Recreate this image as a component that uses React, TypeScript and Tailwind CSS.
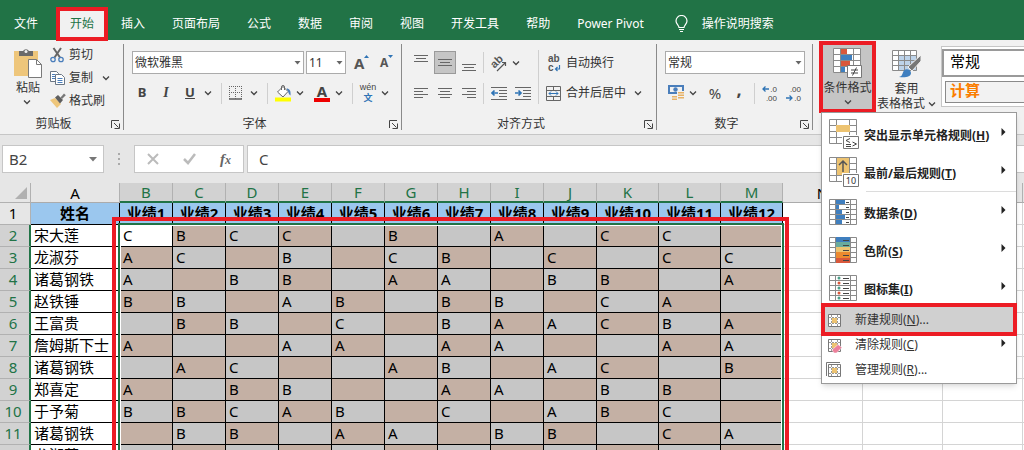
import React from 'react';

const TABS = ['插入', '页面布局', '公式', '数据', '审阅', '视图', '开发工具', '帮助', 'Power Pivot'];

const COLUMNS = 'ABCDEFGHIJKLMNOPQ'.split('');

// one character per column B..M, "-" is an empty cell
const ROWS = [
  { name: '宋大莲', grades: 'CBCC-B-A-CC-' },
  { name: '龙淑芬', grades: 'AC-B-CB-C-CC' },
  { name: '诸葛钢铁', grades: 'A-BB-AA-BB-A' },
  { name: '赵铁锤', grades: 'BB-AB-BB-CA-' },
  { name: '王富贵', grades: '-BB-C-BAACBA' },
  { name: '詹姆斯下士', grades: 'A--AA-AA--AA' },
  { name: '诸葛钢铁', grades: '-AC--AB-AC-B' },
  { name: '郑喜定', grades: 'A-BB--AA-BB-' },
  { name: '于予菊', grades: 'BBCAB-C-ABC-' },
  { name: '诸葛钢铁', grades: '-BB-AA-BB-CA' },
  { name: '龙淑芬', grades: 'B-CA-BB-AC-B' },
];

const Chevron = () => (
  <svg width="8" height="6" viewBox="0 0 8 6" fill="none" stroke="#444" strokeWidth="1.3" className="shrink-0">
    <path d="M1 1.5l3 3 3-3" />
  </svg>
);

const ChevronButton = ({ label }: { label: string }) => (
  <button aria-label={label} className="flex h-full w-3 items-center justify-center">
    <Chevron />
  </button>
);

const Sep = () => <div className="mx-[7px] h-[21px] w-px bg-[#cfcfcf]" />;

const Divider = () => <div className="my-1 w-px shrink-0 bg-[#8a8a8a]" />;

const Dropdown = ({ label, value, width }: { label: string; value: string; width: string }) => (
  <div className={`relative h-[23px] ${width}`}>
    <select
      aria-label={label}
      className="h-full w-full appearance-none border border-[#ababab] bg-white pl-0.5 text-xs text-[#333]"
    >
      <option>{value}</option>
    </select>
    <svg className="pointer-events-none absolute right-[3px] top-[10px]" width="7" height="4" fill="#666">
      <path d="M0.5 0h6L3.5 3.5z" />
    </svg>
  </div>
);

const Group = ({ label, width, children }: { label: string; width: string; children: React.ReactNode }) => (
  <section aria-label={label} className={`flex shrink-0 flex-col ${width}`}>
    <div className="h-[75px]">{children}</div>
    <div className="flex h-[18px] items-center">
      <span className="flex-1 text-center leading-4">{label}</span>
      <button aria-label={`${label}设置`} className="flex w-4 justify-center">
        <svg width="9" height="9" fill="none" stroke="#444">
          <path d="M0.5 8V0.5H8M3 3l4.5 4.5M8.500 3.500V8.500H3.500" />
        </svg>
      </button>
    </div>
  </section>
);

/* ---------- ribbon icons ---------- */

const PasteIcon = () => (
  <svg width="28" height="30" viewBox="0 0 28 30" className="shrink-0">
    <path d="M0 3h24v25H0z" fill="#eec67b" />
    <path d="M5 3h4a3.500 3.500 0 0 1 6 0h4v5H5z" fill="#6a6a6a" />
    <circle cx="12" cy="3.500" r="1.500" fill="#f1f1f1" />
    <path d="M14.500 11.500h8l5 5v13h-13z" fill="#fff" stroke="#7a7a7a" />
    <path d="M22.500 11.500v5h5" fill="none" stroke="#7a7a7a" />
  </svg>
);

const CutIcon = () => (
  <svg width="16" height="16" viewBox="0 0 16 16" fill="none">
    <path d="M3.500 1l6.500 9.500M11 1L4.500 10.500" stroke="#666" strokeWidth="2" />
    <circle cx="3" cy="12.500" r="2.200" stroke="#4a7ebb" strokeWidth="1.300" />
    <circle cx="11" cy="12.500" r="2.200" stroke="#4a7ebb" strokeWidth="1.300" />
  </svg>
);

const CopyIcon = () => (
  <svg width="16" height="16" viewBox="0 0 16 16" fill="#fff" stroke="#6b7785">
    <path d="M0.500 1.500h6l2 2v8h-8z" />
    <path d="M5.500 4.500h6l3 3v7h-9z" />
    <path d="M2 4.500h3M2 6.500h3M2 8.500h3M7.500 8.500h5M7.500 10.500h5M7.500 12.500h5" stroke="#4a7ebb" />
  </svg>
);

const BrushIcon = () => (
  <svg width="16" height="16" viewBox="0 0 16 16">
    <path d="M0 7l5-2 6 6-4 4z" fill="#eec67b" />
    <path d="M5 4.500l3-2.500 5 5-3 3.500z" fill="#5f5f5f" />
    <path d="M10.500 4.500L14 0.500l1.800 1.800L12 6z" fill="#777" />
  </svg>
);

const BordersIcon = () => (
  <svg width="14" height="14" fill="none" stroke="#666">
    <path d="M0.500 0v13M6.500 0v13M12.500 0v13M0 0.500h13M0 6.500h13" strokeDasharray="1 1" />
    <path d="M0 13h13" strokeWidth="1.600" />
  </svg>
);

const BucketIcon = () => (
  <svg width="17" height="17" viewBox="0 0 17 17" fill="none">
    <path d="M2.500 7L8 1.500l5 5-5 5.500z" fill="#fff" stroke="#666" />
    <path d="M6.500 5V2a1.500 1.500 0 0 1 3 0v3" stroke="#666" />
    <path d="M11.500 3.500c3 0 4.500 2 4 7-1.500-1-2-2.500-2.500-4z" fill="#4a7ebb" />
    <path d="M0 12.500h16v4H0z" fill="#ff0" />
  </svg>
);

const Lines = ({ d }: { d: string }) => (
  <svg width="14" height="16" viewBox="0 0 14 16" fill="none" stroke="#666">
    <path d={d} />
  </svg>
);

const IndentIcon = ({ right = false }: { right?: boolean }) => (
  <svg width="16" height="14" fill="none" stroke="#666">
    <path d="M0 1.500h16M8 4.500h8M8 7.500h8M8 10.500h8M0 13.500h16" />
    {right ? (
      <path d="M0 7h6M3.500 4.500L6 7 3.500 9.500" stroke="#2f74b5" strokeWidth="1.700" />
    ) : (
      <path d="M1 7h6M3.500 4.500L1 7l2.500 2.500" stroke="#2f74b5" strokeWidth="1.700" />
    )}
  </svg>
);

const AngleIcon = () => (
  <svg width="16" height="18" viewBox="0 0 16 18" fill="none" className="overflow-visible font-['Liberation_Sans']">
    <text x="0" y="12" fontSize="11" fontWeight="600" fill="#555" transform="rotate(-45 5 9)">
      ab
    </text>
    <path d="M6 17l8.500-8.500M14.500 12V8.500H11" stroke="#555" strokeWidth="1.200" />
  </svg>
);

const WrapIcon = () => (
  <svg width="14" height="18" viewBox="0 0 14 18" className="overflow-visible font-['Liberation_Sans']">
    <text x="0" y="8" fontSize="10" fontWeight="600" fill="#555">
      ab
    </text>
    <text x="0" y="17" fontSize="10" fontWeight="600" fill="#555">
      c
    </text>
    <path d="M11.500 11v4H7.500M9.500 13l-2 2 2 2" fill="none" stroke="#2f74b5" strokeWidth="1.200" />
  </svg>
);

const MergeIcon = () => (
  <svg width="15" height="15" fill="none" stroke="#666">
    <path d="M0.500 0.500h14v14h-14zM0 4.500h15M0 10.500h15M7.500 0v4.500M7.500 10.500V15" />
    <path d="M3 7.500h9M5 5.500l-2 2 2 2M10 5.500l2 2-2 2" stroke="#2f74b5" />
  </svg>
);

const MoneyIcon = () => (
  <svg width="17" height="16" viewBox="0 0 17 16">
    <path d="M0 0h16v9H0z" fill="#4a7ebb" />
    <path d="M2 2h12v5H2z" fill="#f1f1f1" />
    <circle cx="7.500" cy="4.500" r="2.200" fill="#4a7ebb" />
    <path d="M9 6h7v9H9z" fill="#f1f1f1" />
    <path d="M10 7h6v1.500h-6zM10 9.500h6V11h-6zM10 12h6v1.500h-6zM4 11h5v1.500H4zM4 13.500h5V15H4z" fill="#e8b266" />
  </svg>
);

const DecimalIcon = ({ more = false }: { more?: boolean }) => (
  <svg width="16" height="18" viewBox="0 0 16 18" className="overflow-visible font-['Liberation_Sans']">
    <text x="15" y="8" textAnchor="end" fontSize="8" fill="#444">
      {more ? '.0' : '.00'}
    </text>
    <text x="15" y="17" textAnchor="end" fontSize="8" fill="#444">
      {more ? '.00' : '.0'}
    </text>
    {more ? (
      <path d="M1 5h6M3.500 2.500L1 5l2.500 2.500" fill="none" stroke="#2f74b5" strokeWidth="1.300" />
    ) : (
      <path d="M0 14h6M3.500 11.500L6 14l-2.500 2.500" fill="none" stroke="#2f74b5" strokeWidth="1.300" />
    )}
  </svg>
);

const CondFormatIcon = () => (
  <svg width="29" height="30" viewBox="0 0 29 30">
    <path d="M0.500 0.500h27v24h-27z" fill="#fff" />
    <path d="M8 1h6v5H8zM8 12h9v6H8z" fill="#d9583b" />
    <path d="M8 6h11v6H8zM8 18h4v6H8z" fill="#3f7fbf" />
    <path d="M0.500 0.500h27v24h-27zM0 6.500h28M0 12.500h28M0 18.500h28M7.500 0v24M20.500 0v24" fill="none" stroke="#8a8a8a" />
    <path d="M14.500 17.500h14v12h-14z" fill="#fff" stroke="#777" />
    <path d="M18 22h7M18 25h7M23.500 19.500l-4 8" fill="none" stroke="#444" />
  </svg>
);

const TableFormatIcon = () => (
  <svg width="30" height="28" viewBox="0 0 30 28">
    <path d="M0.500 0.500h24v20h-24z" fill="#fff" />
    <path d="M7 6h18v15H7z" fill="#bdd3ea" />
    <path d="M0.500 0.500h24v20h-24zM0 5.500h25M0 10.500h25M0 15.500h25M6.500 0v20M12.500 0v20M18.500 0v20" fill="none" stroke="#8a8a8a" />
    <path d="M29 5v6l-9 10-4-4z" fill="#777" stroke="#f1f1f1" />
    <path d="M7 27c4-1 3-4 5-6.500 2.500-2.500 7-.5 7 2.500 0 4-6 5-12 4z" fill="#3f7fbf" />
  </svg>
);

/* ---------- menu icons ---------- */

const GRID = 'M0.500 0.500h27v25h-27zM0 5.500h28M0 10.500h28M0 15.500h28M0 20.500h28M6.500 0v25M21.500 0v25';

const HighlightIcon = () => (
  <svg width="30" height="30" viewBox="0 0 30 30">
    <path d="M0.500 0.500h27v24h-27zM0 6.500h28M0 12.500h28M0 18.500h28M7.500 0v24M20.500 0v24" fill="#fff" stroke="#8a8a8a" />
    <path d="M7 6h14v7H7z" fill="#edc371" />
    <path d="M13 16h17v14H13z" fill="#fff" />
    <path d="M14.500 17.500h15v12h-15z" fill="#fff" stroke="#777" />
    <path d="M21 19.500l-4 2 4 2M17 25.500h5M17 27.500h5M23.500 23l4 2-4 2" fill="none" stroke="#444" />
  </svg>
);

const TopIcon = () => (
  <svg width="30" height="30" viewBox="0 0 30 30">
    <path d="M0.500 0.500h27v24h-27zM0 6.500h28M0 12.500h28M0 18.500h28M7.500 0v24M20.500 0v24" fill="#fff" stroke="#8a8a8a" />
    <path d="M8 1h12v17H8z" fill="#edc371" />
    <path d="M14 15V4M10 8l4-4 4 4" fill="none" stroke="#555" strokeWidth="1.500" />
    <path d="M13 16h17v14H13z" fill="#fff" />
    <path d="M14.500 17.500h15v12h-15z" fill="#fff" stroke="#777" />
    <text x="22" y="27" fontSize="9" fontWeight="400" textAnchor="middle" fill="#333">
      10
    </text>
  </svg>
);

const DataBarIcon = () => (
  <svg width="28" height="26">
    <path d={GRID} fill="#fff" stroke="#8a8a8a" />
    <path d="M7 1h9v4H7zM7 6h3v4H7zM7 11h6v4H7zM7 16h9v4H7zM7 21h6v4H7z" fill="#3f7fbf" />
    <path d="M17 3.500h3M17 8.500h3M17 13.500h3M17 18.500h3M17 23.500h3" stroke="#444" />
  </svg>
);

const ScaleIcon = () => (
  <svg width="28" height="26">
    <path d={GRID} fill="#fff" stroke="#8a8a8a" />
    <path d="M7 0h14v5H7z" fill="#3f7fbf" />
    <path d="M7 5h14v5H7z" fill="#6aab9c" />
    <path d="M7 10h14v5H7z" fill="#edc371" />
    <path d="M7 15h14v6H7z" fill="#ec8a2f" />
    <path d="M7 21h14v5H7z" fill="#d9583b" />
    <path d="M14 3.500h6M14 8.500h6M14 13.500h6M14 18.500h6M14 23.500h6" stroke="#444" />
  </svg>
);

const IconSetIcon = () => (
  <svg width="28" height="26">
    <path d={GRID} fill="#fff" stroke="#8a8a8a" />
    {['#4ca08a', '#d9583b', '#4ca08a', '#d9583b', '#4ca08a'].map((color, i) => (
      <circle key={i} cx="10" cy={3 + i * 5} r="1.500" fill={color} />
    ))}
    <path d="M14 3.500h6M14 8.500h6M14 13.500h6M14 18.500h6M14 23.500h6" stroke="#444" />
  </svg>
);

const RuleIcon = ({ kind }: { kind: 'new' | 'clear' | 'manage' }) => (
  <svg width="16" height="16" viewBox="0 0 16 16">
    {kind === 'manage' && <path d="M0.500 14V0.500H14" fill="none" stroke="#777" />}
    <path d="M2.500 2.500h12v12h-12z" fill="#fff" stroke="#777" />
    <path d="M5.500 3v11M11.500 3v11M3 5.500h11M3 11.500h11" stroke="#999" strokeDasharray="2 1" />
    <path d="M6 6h5v5H6z" fill="#edc371" />
    {kind === 'clear' && <path d="M6 13l6-5.500 4 3-5.500 5.500H8z" fill="#ec7f9a" stroke="#fff" strokeWidth="0.500" />}
  </svg>
);

const BIG_ITEMS = [
  { label: '突出显示单元格规则', k: 'H', icon: <HighlightIcon /> },
  { label: '最前/最后规则', k: 'T', icon: <TopIcon />, line: true },
  { label: '数据条', k: 'D', icon: <DataBarIcon /> },
  { label: '色阶', k: 'S', icon: <ScaleIcon /> },
  { label: '图标集', k: 'I', icon: <IconSetIcon /> },
];

const SubArrow = () => (
  <svg width="5" height="8" fill="#222" className="mb-1 ml-auto mr-2.5">
    <path d="M0.500 0v8l4-4z" />
  </svg>
);

const RuleMenu = () => (
  <div
    role="menu"
    className="absolute left-0.5 top-[71px] z-10 w-[196px] border border-[#9a9a9a] bg-white pb-px pt-0.5 text-[#333] shadow-md"
  >
    {BIG_ITEMS.map((item) => (
      <React.Fragment key={item.k}>
        <button role="menuitem" className="flex h-[38px] w-full items-center pl-[7px] font-bold text-[#222]">
          <span className="w-[35px]">{item.icon}</span>
          <span className="whitespace-nowrap pt-1">
            {item.label}(<u>{item.k}</u>)
          </span>
          <SubArrow />
        </button>
        {item.line && <div className="mb-px ml-11 h-px bg-[#dcdcdc]" />}
      </React.Fragment>
    ))}
    <button role="menuitem" className="relative flex h-[25px] w-full items-center bg-[#d0d0d0] pl-1">
      <span className="w-[29px]"><RuleIcon kind="new" /></span>
      <span>新建规则(<u>N</u>)...</span>
      <span className="absolute -inset-x-px -bottom-1 -top-1 border-4 border-[#ec1c24]" />
    </button>
    <button role="menuitem" className="flex h-[25px] w-full items-center pl-1">
      <span className="w-[29px]"><RuleIcon kind="clear" /></span>
      <span>清除规则(<u>C</u>)</span>
      <SubArrow />
    </button>
    <button role="menuitem" className="flex h-[25px] w-full items-center pl-1">
      <span className="w-[29px]"><RuleIcon kind="manage" /></span>
      <span>管理规则(<u>R</u>)...</span>
    </button>
  </div>
);

const TitleTabs = () => (
  <nav className="flex h-10 shrink-0 items-center bg-[#217346] pt-2 text-xs text-white">
    <button className="pl-[14px] pr-[18px]">文件</button>
    <button className="relative z-10 h-[34px] w-[52px] shrink-0 border-4 border-[#ec1c24] bg-[#f1f1f1] text-[#217346]">开始</button>
    {TABS.map((tab) => (
      <button key={tab} className="whitespace-nowrap pl-[13px] pr-[14px]">{tab}</button>
    ))}
    <button className="ml-[17px] flex items-center gap-[14px] whitespace-nowrap">
      <svg width="13" height="18" viewBox="0 0 13 18" fill="none" stroke="#fff" strokeWidth="1.200">
        <path d="M4 12.500c0-2-3-3.500-3-6.500a5.500 5.500 0 0 1 11 0c0 3-3 4.500-3 6.500zM4 14.500h5M5 16.500h3" />
      </svg>
      操作说明搜索
    </button>
  </nav>
);

const Ribbon = () => (
  <div className="flex h-[95px] shrink-0 border-b border-[#c6c6c6] bg-[#f1f1f1] text-xs text-[#333]">
    <Group label="剪贴板" width="w-[123px]">
      <div className="flex">
        <button className="ml-[14px] flex w-7 flex-col pt-2">
          <PasteIcon />
          <span className="mt-0.5 leading-4">粘贴</span>
          <span className="ml-[9px] mt-[3px]"><Chevron /></span>
        </button>
        <div className="ml-2 pt-[3px]">
          <button className="flex h-[23px] items-center gap-[3px]"><CutIcon />剪切</button>
          <div className="flex h-[23px] items-center gap-[7px]">
            <button className="flex items-center gap-[3px]"><CopyIcon />复制</button>
            <ChevronButton label="复制选项" />
          </div>
          <button className="flex h-[23px] items-center gap-[3px]"><BrushIcon />格式刷</button>
        </div>
      </div>
    </Group>
    <Divider />
    <Group label="字体" width="w-[277px]">
      <div className="flex h-[34px] items-end pl-2">
        <Dropdown label="字体" value="微软雅黑" width="w-[172px]" />
        <div className="w-0.5" />
        <Dropdown label="字号" value="11" width="w-[40px]" />
        <button className="ml-2 flex h-[23px] w-[18px] items-center font-bold text-[#555]">
          <span className="text-[15px]">A</span>
          <svg width="5" height="3" className="mb-3" fill="#2f74b5"><path d="M0 3h5L2.500 0z" /></svg>
        </button>
        <button className="ml-2 flex h-[23px] w-[18px] items-center font-bold text-[#555]">
          <span className="text-xs">A</span>
          <svg width="5" height="3" className="mb-3" fill="#2f74b5"><path d="M0 0h5L2.500 3z" /></svg>
        </button>
      </div>
      <div className="mt-2 flex h-[22px] items-center pl-1.5 text-[#444]">
        <button className="w-6 text-[13px] font-bold">B</button>
        <button className="w-6 font-['Liberation_Serif'] text-sm font-bold italic">I</button>
        <button className="w-6 text-[13px] font-bold underline">U</button>
        <ChevronButton label="下划线选项" />
        <Sep />
        <button aria-label="边框" className="w-4"><BordersIcon /></button>
        <div className="w-[3px]" />
        <ChevronButton label="边框选项" />
        <Sep />
        <button aria-label="填充颜色" className="w-4"><BucketIcon /></button>
        <div className="w-[3px]" />
        <ChevronButton label="填充选项" />
        <button className="ml-2 h-[17px] w-4 border-b-4 border-[#e00] text-[15px] font-bold leading-[13px]">A</button>
        <div className="w-[3px]" />
        <ChevronButton label="字体颜色选项" />
        <Sep />
        <button className="flex w-4 flex-col items-center font-['Liberation_Sans','Noto_Sans_CJK_SC',sans-serif] text-[9px]">
          <span className="leading-[10px]">wén</span>
          <span className="font-bold leading-[13px] text-[#2f74b5]">文</span>
        </button>
        <div className="w-[3px]" />
        <ChevronButton label="拼音选项" />
      </div>
    </Group>
    <Divider />
    <Group label="对齐方式" width="w-[254px]">
      <div className="flex">
        <div className="pl-[7px] pt-[11px]">
          <div className="flex h-[23px] items-center">
            <button aria-label="顶端对齐" className="flex w-6 justify-center"><Lines d="M0 0.500h14M2 3.500h10M0 6.500h14" /></button>
            <button aria-label="垂直居中" className="mx-px flex h-[23px] w-[22px] items-center justify-center border border-[#9a9a9a] bg-[#c5c5c5]">
              <Lines d="M0 4.500h14M2 7.500h10M0 10.500h14" />
            </button>
            <button aria-label="底端对齐" className="flex w-6 justify-center"><Lines d="M0 9.500h14M2 12.500h10M0 15.500h14" /></button>
            <div className="ml-0.5 mr-[7px] h-[21px] w-px bg-[#cfcfcf]" />
            <button aria-label="方向"><AngleIcon /></button>
            <div className="w-[3px]" />
            <ChevronButton label="方向选项" />
          </div>
          <div className="mt-2 flex h-[22px] items-center">
            <button aria-label="左对齐" className="flex w-6 justify-center"><Lines d="M0 3.500h14M0 6.500h9M0 9.500h14M0 12.500h9" /></button>
            <button aria-label="居中" className="flex w-6 justify-center"><Lines d="M0 3.500h14M2 6.500h10M0 9.500h14M2 12.500h10" /></button>
            <button aria-label="右对齐" className="flex w-6 justify-center"><Lines d="M0 3.500h14M5 6.500h9M0 9.500h14M5 12.500h9" /></button>
            <div className="ml-0.5 mr-[7px] h-[21px] w-px bg-[#cfcfcf]" />
            <button aria-label="减少缩进"><IndentIcon /></button>
            <button aria-label="增加缩进" className="ml-2"><IndentIcon right /></button>
          </div>
        </div>
        <div className="ml-[7px] mt-[10px] h-[54px] w-px bg-[#cfcfcf]" />
        <div className="pl-[7px] pt-[11px]">
          <button className="flex h-[23px] items-center"><span className="flex w-5 pl-0.5"><WrapIcon /></span>自动换行</button>
          <div className="mt-2 flex h-[22px] items-center">
            <button className="flex items-center"><span className="w-5"><MergeIcon /></span>合并后居中</button>
            <div className="w-1.5" />
            <ChevronButton label="合并选项" />
          </div>
        </div>
      </div>
    </Group>
    <Divider />
    <Group label="数字" width="w-[155px]">
      <div className="flex h-[34px] items-end pl-2">
        <Dropdown label="数字格式" value="常规" width="w-[140px]" />
      </div>
      <div className="mt-2 flex h-[22px] items-center pl-[11px] text-[#444]">
        <button aria-label="会计格式"><MoneyIcon /></button>
        <div className="w-0.5" />
        <ChevronButton label="会计选项" />
        <button className="ml-2 w-4 text-[15px] leading-5">%</button>
        <button className="ml-2 w-4 pb-2 text-lg font-bold leading-4">,</button>
        <Sep />
        <button aria-label="增加小数位数"><DecimalIcon more /></button>
        <button aria-label="减少小数位数" className="ml-2"><DecimalIcon /></button>
      </div>
    </Group>
    <Divider />
    <div className="relative ml-1.5 mt-px h-[72px] w-[57px] shrink-0">
      <button className="flex h-full w-full flex-col items-center justify-start whitespace-nowrap border-4 border-[#ec1c24] bg-[#c5c5c5] pt-[3px]">
        <CondFormatIcon />
        <span className="mt-0.5 leading-4">条件格式</span>
        <span className="mt-[3px]"><Chevron /></span>
      </button>
      <RuleMenu />
    </div>
    <button className="flex h-[74px] w-[61px] shrink-0 flex-col items-center whitespace-nowrap pt-[10px]">
      <TableFormatIcon />
      <span className="mt-[3px] leading-4">套用</span>
      <span className="flex items-center gap-[3px] leading-[14px]">表格格式<Chevron /></span>
    </button>
    <div className="ml-1 mt-1.5 flex h-[61px] min-w-0 flex-1 flex-col gap-1 border border-r-0 border-[#c6c6c6] bg-white pt-0.5 text-[15px]">
      <button className="h-7 border-2 border-r-0 border-[#9a9a9a] pb-1 pl-1.5 text-left leading-5 text-black">常规</button>
      <button className="ml-[3px] h-[22px] border border-r-0 border-[#8a8a8a] bg-[#f2f2f2] pb-1 pl-1 text-left font-bold leading-4 text-[#fa7d00]">
        计算
      </button>
    </div>
  </div>
);

const FormulaBar = () => (
  <div className="flex h-12 shrink-0 items-center bg-[#e6e6e6] pl-0.5 text-[15px] text-[#444]">
    <div className="relative h-7 w-[102px] border border-[#c6c6c6] bg-white">
      <input aria-label="名称框" defaultValue="B2" className="h-full w-20 pl-1.5" />
      <svg className="absolute right-1.5 top-[11px]" width="8" height="5" fill="#777"><path d="M0 0h8L4 4.500z" /></svg>
    </div>
    <svg width="30" height="12" fill="#aaa">
      <path d="M14 0h2v2h-2zM14 5h2v2h-2zM14 10h2v2h-2z" />
    </svg>
    <div className="flex h-7 w-[110px] items-center border border-[#c6c6c6] bg-white pl-3">
      <button aria-label="取消">
        <svg width="12" height="12" stroke="#bbb" strokeWidth="2"><path d="M1 1l10 10M11 1L1 11" /></svg>
      </button>
      <button aria-label="输入" className="ml-6">
        <svg width="13" height="12" fill="none" stroke="#bbb" strokeWidth="2.500"><path d="M1 6l4 4 7-9" /></svg>
      </button>
      <button className="ml-6 font-['Liberation_Serif'] text-[15px] font-bold italic leading-5 text-[#666]">
        f<span className="text-xs">x</span>
      </button>
    </div>
    <input aria-label="编辑栏" defaultValue="C" className="ml-[3px] h-7 min-w-0 flex-1 border border-r-0 border-[#c6c6c6] bg-white pl-[11px]" />
  </div>
);

const isSelectedCol = (i: number) => i >= 1 && i <= 12;

const columnHead = (i: number) =>
  isSelectedCol(i)
    ? 'border-b-2 border-b-[#217346] border-r-[#b1b1b1] bg-[#d2d2d2] text-[#217346]'
    : 'border-b-[#ababab] border-r-[#b1b1b1] bg-[#e6e6e6] text-black';

const gradeCell = (row: number, col: number) => {
  if (row === 0 && col === 0) return 'bg-white';
  return (row + col) % 2 ? 'bg-[#c4b0a4]' : 'bg-[#c6c6c6]';
};

const Sheet = () => (
  <div className="relative min-h-0 flex-1 overflow-hidden bg-white text-[15px] text-black">
    <table className="w-[1103px] table-fixed border-separate border-spacing-0">
      <colgroup>
        <col className="w-[31px]" />
        <col className="w-[89px]" />
        {COLUMNS.slice(1, 10).map((c) => <col key={c} className="w-[53px]" />)}
        {COLUMNS.slice(10, 13).map((c) => <col key={c} className="w-[62px]" />)}
        {COLUMNS.slice(13).map((c) => <col key={c} className="w-[80px]" />)}
      </colgroup>
      <thead>
        <tr className="h-5 leading-[18px]">
          <th className="border-b border-r border-[#b1b1b1] bg-[#e6e6e6] p-0">
            <svg width="12" height="12" className="ml-auto mr-[3px]" fill="#b1b1b1"><path d="M12 0v12H0z" /></svg>
          </th>
          {COLUMNS.map((c, i) => (
            <th key={c} className={`border-b border-r p-0 font-normal ${columnHead(i)}`}>{c}</th>
          ))}
        </tr>
      </thead>
      <tbody>
        <tr className="h-[22px] leading-[21px]">
          <th className="border-b border-r border-[#b1b1b1] bg-[#e6e6e6] p-0 pr-1 font-normal">1</th>
          <th className="border-b border-r border-black bg-[#9bc7ee] p-0">姓名</th>
          {COLUMNS.slice(1, 13).map((c, i) => (
            <th key={c} className="border-b border-r border-black bg-[#9bc7ee] p-0">业绩{i + 1}</th>
          ))}
          {COLUMNS.slice(13).map((c) => <td key={c} className="border-b border-r border-[#d4d4d4] p-0" />)}
        </tr>
        {ROWS.map((row, r) => (
          <tr key={r} className="h-[22px] leading-[21px]">
            <th className="border-b border-r-2 border-b-[#b1b1b1] border-r-[#217346] bg-[#d2d2d2] p-0 pr-[3px] font-normal text-[#217346]">
              {r + 2}
            </th>
            <td className="whitespace-nowrap border-b border-r border-black p-0 pl-[3px]">{row.name}</td>
            {row.grades.split('').map((g, c) => (
              <td key={c} className={`border-b border-r border-black p-0 pl-[3px] ${gradeCell(r, c)}`}>
                {g === '-' ? '' : g}
              </td>
            ))}
            {COLUMNS.slice(13).map((c) => <td key={c} className="border-b border-r border-[#d4d4d4] p-0" />)}
          </tr>
        ))}
      </tbody>
    </table>
    {/* selection border of B2:M12 and the callout around it */}
    <div className="pointer-events-none absolute -bottom-2 left-[118px] top-10 w-[666px] border-2 border-[#217346]">
      <div className="h-full border border-white" />
    </div>
    <div className="pointer-events-none absolute -bottom-2 left-28 top-[34px] w-[677px] border-4 border-[#ec1c24]" />
  </div>
);

export default function App() {
  return (
    <div className="flex h-screen w-full flex-col overflow-hidden font-['Noto_Sans','Noto_Sans_CJK_SC',sans-serif]">
      <TitleTabs />
      <Ribbon />
      <FormulaBar />
      <Sheet />
    </div>
  );
}
